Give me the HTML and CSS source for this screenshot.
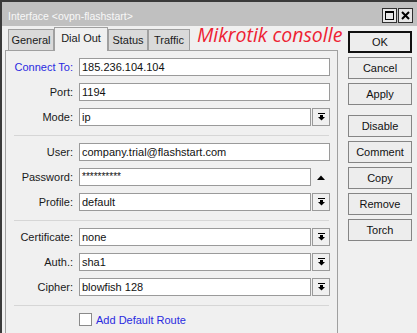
FILE: index.html
```html
<!DOCTYPE html>
<html>
<head>
<meta charset="utf-8">
<link rel="stylesheet" href="styles.css">
</head>
<body>
<div class="window">
  <div class="titlebar">
    <span class="title">Interface &lt;ovpn-flashstart&gt;</span>
    <div class="wctl">
      <span class="wbtn"><svg width="9" height="9" viewBox="0 0 9 9"><path d="M0 0h9v9H0z M1 2v6h7V2z" fill="#000" fill-rule="evenodd"/></svg></span>
      <span class="wbtn"><svg width="9" height="9" viewBox="0 0 9 9"><path d="M1 1L8 8M8 1L1 8" stroke="#000" stroke-width="2"/></svg></span>
    </div>
  </div>
  <div class="content">
    <div class="main">
      <div class="tabs">
        <div class="tab t-general">General</div>
        <div class="tab t-dial active">Dial Out</div>
        <div class="tab t-status">Status</div>
        <div class="tab t-traffic">Traffic</div>
      </div>
      <div class="panel">
        <div class="group">
          <div class="lbl blue">Connect To:</div><div class="input">185.236.104.104</div>
          <div class="lbl">Port:</div><div class="input">1194</div>
          <div class="lbl">Mode:</div>
          <div class="combo"><div class="input">ip</div><div class="drop"><svg width="7" height="8" viewBox="0 0 7 8"><rect x="0" y="0" width="7" height="1"/><rect x="2" y="2" width="3" height="2"/><path d="M0 4h7L3.5 7.5z"/></svg></div></div>
        </div>
        <div class="sep"></div>
        <div class="group">
          <div class="lbl">User:</div><div class="input">company.trial@flashstart.com</div>
          <div class="lbl">Password:</div>
          <div class="combo"><div class="input pw">**********</div><div class="up"><svg width="8" height="5" viewBox="0 0 8 5"><path d="M0 5L4 0.5 8 5z"/></svg></div></div>
          <div class="lbl">Profile:</div>
          <div class="combo"><div class="input">default</div><div class="drop"><svg width="7" height="8" viewBox="0 0 7 8"><rect x="0" y="0" width="7" height="1"/><rect x="2" y="2" width="3" height="2"/><path d="M0 4h7L3.5 7.5z"/></svg></div></div>
        </div>
        <div class="sep"></div>
        <div class="group">
          <div class="lbl">Certificate:</div>
          <div class="combo"><div class="input">none</div><div class="drop"><svg width="7" height="8" viewBox="0 0 7 8"><rect x="0" y="0" width="7" height="1"/><rect x="2" y="2" width="3" height="2"/><path d="M0 4h7L3.5 7.5z"/></svg></div></div>
          <div class="lbl">Auth.:</div>
          <div class="combo"><div class="input">sha1</div><div class="drop"><svg width="7" height="8" viewBox="0 0 7 8"><rect x="0" y="0" width="7" height="1"/><rect x="2" y="2" width="3" height="2"/><path d="M0 4h7L3.5 7.5z"/></svg></div></div>
          <div class="lbl">Cipher:</div>
          <div class="combo"><div class="input">blowfish 128</div><div class="drop"><svg width="7" height="8" viewBox="0 0 7 8"><rect x="0" y="0" width="7" height="1"/><rect x="2" y="2" width="3" height="2"/><path d="M0 4h7L3.5 7.5z"/></svg></div></div>
        </div>
        <div class="sep"></div>
        <div class="check-row">
          <span class="checkbox"></span><span class="blue">Add Default Route</span>
        </div>
      </div>
    </div>
    <div class="buttons">
      <div class="btn default">OK</div>
      <div class="btn">Cancel</div>
      <div class="btn">Apply</div>
      <div class="btn gap">Disable</div>
      <div class="btn">Comment</div>
      <div class="btn">Copy</div>
      <div class="btn">Remove</div>
      <div class="btn">Torch</div>
    </div>
  </div>
  <div class="note">Mikrotik consolle</div>
</div>
</body>
</html>
```

FILE: styles.css
```css
html, body {
  margin: 0;
  padding: 0;
  background: #f0f0f0;
}
body {
  font-family: "Liberation Sans", Arial, sans-serif;
  font-size: 11px;
  color: #1a1a1a;
  overflow: hidden;
}
.window {
  position: relative;
  width: 415px;
  height: 345px;
  border-top: 2px solid #3a3a3a;
  border-left: 2px solid #3a3a3a;
  background: #f0f0f0;
  display: flex;
  flex-direction: column;
}
.titlebar {
  height: 24px;
  background: #c0c0c0;
  display: flex;
  align-items: flex-start;
  justify-content: space-between;
  padding: 0 4px 0 6px;
}
.title {
  color: #f8f8f8;
  font-size: 10.5px;
  line-height: 22px;
  padding-top: 3px;
}
.wctl {
  display: flex;
  gap: 1px;
  margin-top: 6px;
}
.wbtn {
  width: 13px;
  height: 13px;
  border: 1px solid #303030;
  background: #e6e6e6;
  display: flex;
  align-items: center;
  justify-content: center;
}
.content {
  flex: 1;
  display: flex;
}
.main {
  width: 333px;
  padding-left: 3px;
  display: flex;
  flex-direction: column;
}
.tabs {
  height: 24px;
  display: flex;
  align-items: flex-end;
  padding-left: 3px;
  position: relative;
  z-index: 1;
}
.tab {
  box-sizing: border-box;
  height: 21px;
  border: 1px solid #a0a0a0;
  border-bottom: none;
  background: #dadada;
  text-align: center;
  line-height: 20px;
  font-size: 11px;
}
.tab.active {
  height: 24px;
  margin-bottom: -1px;
  background: #f0f0f0;
  line-height: 21px;
}
.t-general { width: 46px; }
.t-dial { width: 54px; }
.t-status { width: 40px; }
.t-traffic { width: 42px; }
.panel {
  flex: 1;
  border: 1px solid #a0a0a0;
  padding: 7px 7px 0 0;
}
.group {
  display: grid;
  grid-template-columns: 67px 1fr;
  column-gap: 6px;
  row-gap: 7px;
}
.lbl {
  text-align: right;
  line-height: 18px;
  font-size: 11px;
}
.blue {
  color: #2a2ae0;
}
.input {
  box-sizing: border-box;
  height: 18px;
  border: 1px solid #9a9a9a;
  background: #fff;
  padding-left: 2px;
  line-height: 16px;
  font-size: 11px;
  color: #111;
}
.combo {
  display: flex;
  gap: 1px;
}
.combo .input {
  flex: 1;
}
.drop {
  box-sizing: border-box;
  width: 18px;
  height: 18px;
  border: 1px solid #9a9a9a;
  background: #f0f0f0;
  display: flex;
  align-items: center;
  justify-content: center;
}
.up {
  width: 18px;
  height: 18px;
  display: flex;
  align-items: center;
  justify-content: center;
}
.pw {
  font-size: 10px;
}
.sep {
  height: 1px;
  background: #d6d6d6;
  margin: 9px 1px 7px 8px;
}
.check-row {
  display: flex;
  align-items: center;
  gap: 4px;
  padding-left: 73px;
  font-size: 11px;
}
.checkbox {
  box-sizing: border-box;
  width: 13px;
  height: 13px;
  border: 1px solid #8a8a8a;
  background: #fff;
}
.buttons {
  margin-left: 10px;
  padding-top: 5px;
  width: 64px;
  display: flex;
  flex-direction: column;
  gap: 4px;
}
.btn {
  box-sizing: border-box;
  height: 22px;
  border: 1px solid #858585;
  background: #ededed;
  text-align: center;
  line-height: 20px;
  font-size: 11px;
  color: #111;
}
.btn.default {
  border: 2px solid #111;
  line-height: 18px;
}
.btn.gap {
  margin-top: 6px;
}
.note {
  position: absolute;
  left: 195px;
  top: 19px;
  font-family: "Open Sans", sans-serif;
  font-style: italic;
  font-size: 19.5px;
  color: #ee2233;
  white-space: nowrap;
}
```
